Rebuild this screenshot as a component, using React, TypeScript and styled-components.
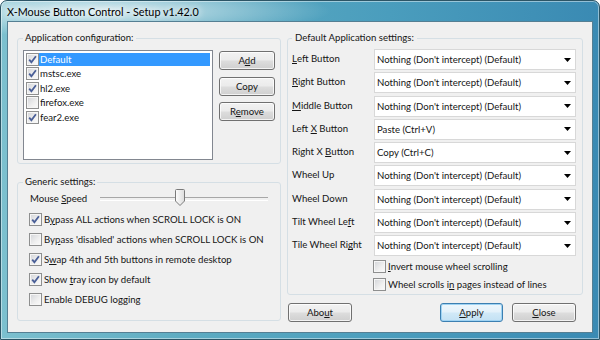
import React from "react";
import styled, { createGlobalStyle, css } from "styled-components";

const FONT = `Lato, "Liberation Sans", sans-serif`;

const GlobalStyle = createGlobalStyle`
  html, body {
    margin: 0;
    padding: 0;
    background: #ffffff;
  }
  body {
    font-family: ${FONT};
    font-size: 9.6px;
    color: #151515;
  }
  * {
    box-sizing: border-box;
  }
`;

const Window = styled.div`
  width: 600px;
  height: 340px;
  display: flex;
  flex-direction: column;
  padding: 0 6px 6px 6px;
  border: 1px solid #2c5566;
  border-radius: 7px 7px 0 0;
  overflow: hidden;
  box-shadow: inset 0 0 0 1px rgba(255, 255, 255, 0.45);
  background:
    radial-gradient(ellipse 230px 26px at 100px 10px, rgba(255, 255, 255, 0.75), rgba(255, 255, 255, 0) 100%),
    linear-gradient(90deg, #7cc0cf 0%, #5eacc2 30%, #4a9dbd 65%, #3a8ab3 100%);
`;

const TitleBar = styled.div`
  height: 20px;
  display: flex;
  align-items: center;
  font-size: 10.8px;
  color: #000000;
  text-shadow: 0 0 6px #ffffff, 0 0 10px #ffffff;
`;

const Client = styled.div`
  flex: 1;
  display: grid;
  grid-template-columns: 264px 296px;
  column-gap: 6px;
  align-items: start;
  padding: 9px 9px 0 9px;
  background: #f0f0f0;
  border: 1px solid #557f93;
`;

const Column = styled.div`
  display: flex;
  flex-direction: column;
`;

const Group = styled.fieldset<{ $gap?: number }>`
  margin: ${(p) => p.$gap ?? 0}px 0 0 0;
  padding: 0 5px 3px 5px;
  min-width: 0;
  border: 1px solid #d5dfe5;
  border-radius: 3px;
`;

const Legend = styled.legend`
  padding: 0 2px;
  line-height: 14px;
`;

const AppRow = styled.div`
  display: flex;
  padding-top: 5px;
`;

const ListBox = styled.div`
  width: 190px;
  height: 110px;
  padding: 1px;
  background: #ffffff;
  border: 1px solid #828790;
`;

const ListItem = styled.div`
  display: flex;
  align-items: center;
  height: 14.5px;
  padding-left: 1px;
`;

const ItemText = styled.span<{ $selected?: boolean }>`
  flex: 1;
  height: 13px;
  line-height: 13px;
  margin-right: 1px;
  padding-left: 1px;
  ${(p) =>
    p.$selected &&
    css`
      background: #3399ff;
      color: #ffffff;
    `}
`;

const ButtonStack = styled.div`
  display: flex;
  flex-direction: column;
  gap: 6.5px;
  margin-left: 6px;
  padding-top: 1px;
`;

const Button = styled.button<{ $w: number; $default?: boolean }>`
  width: ${(p) => p.$w}px;
  height: 19px;
  padding: 0;
  font-family: ${FONT};
  font-size: 9.6px;
  color: #151515;
  border: 1px solid #707070;
  border-radius: 3px;
  background: linear-gradient(#f2f2f2 0%, #ebebeb 48%, #dddddd 52%, #cfcfcf 100%);
  box-shadow: inset 0 0 0 1px rgba(255, 255, 255, 0.75);
  ${(p) =>
    p.$default &&
    css`
      border-color: #3c7fb1;
      background: linear-gradient(#eef7fc 0%, #e3f1fa 48%, #d1e9f7 52%, #c3e1f4 100%);
      box-shadow: inset 0 0 0 1px #9fd3f3;
    `}
`;

const BoxWrap = styled.span`
  width: 13px;
  height: 13px;
  flex: none;
  display: inline-flex;
  align-items: center;
  justify-content: center;
  border: 1px solid #8e8f8f;
  background: linear-gradient(135deg, #d2d4d8 0%, #f0f0f0 60%, #fbfbfb 100%);
  box-shadow: inset 0 0 0 1px #f6f6f6;
`;

const Check = ({ on }: { on?: boolean }) => (
  <BoxWrap>
    {on && (
      <svg width="11" height="11" viewBox="0 0 11 11">
        <path d="M2.2 5.6 L4.4 8.2 L8.9 2.2" fill="none" stroke="#4a5f97" strokeWidth="1.8" />
      </svg>
    )}
  </BoxWrap>
);

const SpeedRow = styled.div`
  display: flex;
  align-items: center;
  height: 18px;
  padding-left: 7px;
`;

const SpeedLabel = styled.span`
  width: 70px;
`;

const Track = styled.div`
  position: relative;
  flex: 1;
  height: 18px;
  margin-right: 7px;
  &::before {
    content: "";
    position: absolute;
    left: 0;
    right: 0;
    top: 8px;
    height: 2px;
    border-top: 1px solid #a7a7a7;
    border-bottom: 1px solid #ffffff;
  }
`;

const Thumb = styled.svg`
  position: absolute;
  left: 75px;
  top: 0;
`;

const CheckRow = styled.label<{ $h?: number; $indent?: number }>`
  display: flex;
  align-items: center;
  gap: 2px;
  height: ${(p) => p.$h ?? 20}px;
  padding-left: ${(p) => p.$indent ?? 6}px;
  white-space: nowrap;
`;

const CheckList = styled.div`
  display: flex;
  flex-direction: column;
  padding-top: 2px;
  padding-bottom: 8px;
`;

const SettingsGroup = styled(Group)`
  padding: 0 6px 0 4px;
  ${Legend} {
    padding: 0 3px;
  }
`;

const SettingsGrid = styled.div`
  display: grid;
  grid-template-columns: 82px 202px;
  row-gap: 2.3px;
  margin-top: 4px;
`;

const RowLabel = styled.span`
  display: flex;
  align-items: center;
  height: 21px;
  padding-bottom: 2px;
  white-space: pre;
`;

const Combo = styled.div`
  display: flex;
  align-items: center;
  justify-content: space-between;
  height: 21px;
  padding: 0 4px 0 2px;
  background: #ffffff;
  border: 1px solid #d8d8d8;
`;

const Options = styled.div`
  display: flex;
  flex-direction: column;
  margin: 1.6px 0 0 81px;
`;

const Footer = styled.div`
  display: flex;
  align-items: center;
  gap: 9px;
  margin-top: 8px;
  padding: 0 7px 0 1px;
`;

const Spacer = styled.div`
  flex: 1;
`;

const Arrow = () => (
  <svg width="7" height="4" viewBox="0 0 7 4">
    <path d="M0 0 H7 L3.5 4 Z" fill="#000000" />
  </svg>
);

const apps = [
  { name: "Default", on: true, selected: true },
  { name: "mstsc.exe", on: true },
  { name: "hl2.exe", on: true },
  { name: "firefox.exe", on: false },
  { name: "fear2.exe", on: true },
];

const NONE = "Nothing (Don't intercept) (Default)";

const settings: { label: React.ReactNode; value: string }[] = [
  { label: <><u>L</u>eft Button</>, value: NONE },
  { label: <><u>R</u>ight Button</>, value: NONE },
  { label: <><u>M</u>iddle Button</>, value: NONE },
  { label: <>{"Left "}<u>X</u>{" Button"}</>, value: "Paste (Ctrl+V)" },
  { label: <>{"Right X "}<u>B</u>utton</>, value: "Copy (Ctrl+C)" },
  { label: <>Wheel Up</>, value: NONE },
  { label: <>Wheel Down</>, value: NONE },
  { label: <>Tilt Wheel Le<u>f</u>t</>, value: NONE },
  { label: <>Tile Wheel Ri<u>g</u>ht</>, value: NONE },
];

const generic: { label: React.ReactNode; on: boolean }[] = [
  { label: <>B<u>y</u>pass ALL actions when SCROLL LOCK is ON</>, on: true },
  { label: <>By<u>p</u>ass 'disabled' actions when SCROLL LOCK is ON</>, on: false },
  { label: <>S<u>w</u>ap 4th and 5th buttons in remote desktop</>, on: true },
  { label: <>Show <u>t</u>ray icon by default</>, on: true },
  { label: <>Enable DEBUG logging</>, on: false },
];

export default function App() {
  return (
    <>
      <GlobalStyle />
      <Window>
        <TitleBar>X-Mouse Button Control - Setup v1.42.0</TitleBar>
        <Client>
          <Column>
            <Group>
              <Legend>Application configuration:</Legend>
              <AppRow>
                <ListBox>
                  {apps.map((a) => (
                    <ListItem key={a.name}>
                      <Check on={a.on} />
                      <ItemText $selected={a.selected}>{a.name}</ItemText>
                    </ListItem>
                  ))}
                </ListBox>
                <ButtonStack>
                  <Button $w={56}>A<u>d</u>d</Button>
                  <Button $w={56}>Copy</Button>
                  <Button $w={56}>R<u>e</u>move</Button>
                </ButtonStack>
              </AppRow>
            </Group>
            <Group $gap={11}>
              <Legend>Generic settings:</Legend>
              <SpeedRow>
                <SpeedLabel>
                  Mouse <u>S</u>peed
                </SpeedLabel>
                <Track>
                  <Thumb width="10" height="17" viewBox="0 0 10 17">
                    <defs>
                      <linearGradient id="thumb" x1="0" y1="0" x2="1" y2="0">
                        <stop offset="0" stopColor="#fdfdfd" />
                        <stop offset="1" stopColor="#dcdcdc" />
                      </linearGradient>
                    </defs>
                    <path
                      d="M1.5 0.5 H8.5 Q9.5 0.5 9.5 1.5 V12 L5 16.5 L0.5 12 V1.5 Q0.5 0.5 1.5 0.5 Z"
                      fill="url(#thumb)"
                      stroke="#7a7a7a"
                    />
                  </Thumb>
                </Track>
              </SpeedRow>
              <CheckList>
                {generic.map((g, i) => (
                  <CheckRow key={i}>
                    <Check on={g.on} />
                    <span>{g.label}</span>
                  </CheckRow>
                ))}
              </CheckList>
            </Group>
          </Column>
          <Column>
            <SettingsGroup>
              <Legend>Default Application settings:</Legend>
              <SettingsGrid>
                {settings.map((s, i) => (
                  <React.Fragment key={i}>
                    <RowLabel>{s.label}</RowLabel>
                    <Combo>
                      <span>{s.value}</span>
                      <Arrow />
                    </Combo>
                  </React.Fragment>
                ))}
              </SettingsGrid>
              <Options>
                <CheckRow $h={18} $indent={0}>
                  <Check />
                  <span>
                    <u>I</u>nvert mouse wheel scrolling
                  </span>
                </CheckRow>
                <CheckRow $h={18} $indent={0}>
                  <Check />
                  <span>
                    Wheel scrolls i<u>n</u> pages instead of lines
                  </span>
                </CheckRow>
              </Options>
            </SettingsGroup>
            <Footer>
              <Button $w={64}>
                Abo<u>u</u>t
              </Button>
              <Spacer />
              <Button $w={63} $default>
                <u>A</u>pply
              </Button>
              <Button $w={64}>
                <u>C</u>lose
              </Button>
            </Footer>
          </Column>
        </Client>
      </Window>
    </>
  );
}
